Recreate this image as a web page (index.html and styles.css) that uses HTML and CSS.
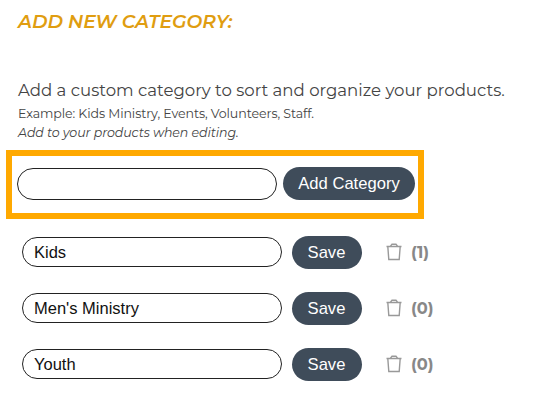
FILE: index.html
```html
<!DOCTYPE html>
<html lang="en">
<head>
  <meta charset="UTF-8" />
  <title>Add New Category</title>
  <meta name="viewport" content="width=device-width, initial-scale=1.0" />
  <link rel="stylesheet" href="styles.css">
</head>
<body>

  <h1>ADD NEW CATEGORY:</h1>

  <div class="intro">
    <p class="lead">Add a custom category to sort and organize your products.</p>
    <p class="example">Example: Kids Ministry, Events, Volunteers, Staff.</p>
    <p class="note">Add to your products when editing.</p>
  </div>

  <form class="add-category">
    <input type="text" name="category" aria-label="New category" />
    <button type="submit">Add Category</button>
  </form>

  <div class="category-list">
    <div class="category-item">
      <input type="text" value="Kids" aria-label="Category name" />
      <button type="button">Save</button>
      <svg class="trash" viewBox="0 0 16 18">
        <path d="M0.5 3.5H15.5M4.5 3.2L6 1.2H10L11.5 3.2M1.8 3.5L2.8 16.5H13.2L14.2 3.5" />
      </svg>
      <span class="count">(1)</span>
    </div>
    <div class="category-item">
      <input type="text" value="Men's Ministry" aria-label="Category name" />
      <button type="button">Save</button>
      <svg class="trash" viewBox="0 0 16 18">
        <path d="M0.5 3.5H15.5M4.5 3.2L6 1.2H10L11.5 3.2M1.8 3.5L2.8 16.5H13.2L14.2 3.5" />
      </svg>
      <span class="count">(0)</span>
    </div>
    <div class="category-item">
      <input type="text" value="Youth" aria-label="Category name" />
      <button type="button">Save</button>
      <svg class="trash" viewBox="0 0 16 18">
        <path d="M0.5 3.5H15.5M4.5 3.2L6 1.2H10L11.5 3.2M1.8 3.5L2.8 16.5H13.2L14.2 3.5" />
      </svg>
      <span class="count">(0)</span>
    </div>
  </div>

</body>
</html>
```
FILE: styles.css
```css
* {
  box-sizing: border-box;
}

body {
  margin: 0;
  padding: 10px 0 0 6px;
  background: #fff;
  color: #444;
  font-family: Montserrat, Inter, sans-serif;
}

h1 {
  margin: 0 0 0 12px;
  color: #e09d10;
  font-size: 18.7px;
  font-style: italic;
  font-weight: 600;
  line-height: 24px;
}

.intro {
  margin: 44px 0 0 12px;
  white-space: nowrap;
}

.intro p {
  margin: 0;
}

.intro .lead {
  font-size: 16.57px;
  line-height: 25px;
}

.intro .example,
.intro .note {
  font-size: 12.6px;
  line-height: 21px;
  letter-spacing: -0.09px;
}

.intro .note {
  font-style: italic;
  line-height: 18px;
}

.add-category {
  display: flex;
  align-items: center;
  gap: 6px;
  width: 418px;
  height: 69px;
  margin-top: 8px;
  padding: 0 0 2px 5px;
  border: 6px solid #ffa900;
}

input {
  width: 260px;
  height: 30px;
  margin-bottom: 1px;
  padding: 1px 11px 0;
  border: 1px solid #222;
  border-radius: 16px;
  background: #fff;
  color: #111;
  font: 16.5px "Liberation Sans", Arial, sans-serif;
}

.add-category input {
  height: 32px;
  margin-bottom: 0;
}

button {
  width: 70px;
  height: 33px;
  padding: 0;
  border: none;
  border-radius: 17px;
  background: #3f4c5a;
  color: white;
  font: 16.6px "Liberation Sans", Arial, sans-serif;
  cursor: pointer;
}

.add-category button {
  width: 132px;
}

.category-list {
  display: flex;
  flex-direction: column;
  gap: 23px;
  margin: 17px 0 0 16px;
}

.category-item {
  display: flex;
  align-items: center;
}

.category-item button {
  margin-left: 9.5px;
}

.trash {
  width: 16px;
  height: 18px;
  margin: 0 0 1px 24.5px;
  fill: none;
  stroke: #999;
  stroke-width: 1.4;
}

.count {
  margin: 0 0 1px 9px;
  color: #888;
  font-size: 16.2px;
  font-weight: 700;
}
```
